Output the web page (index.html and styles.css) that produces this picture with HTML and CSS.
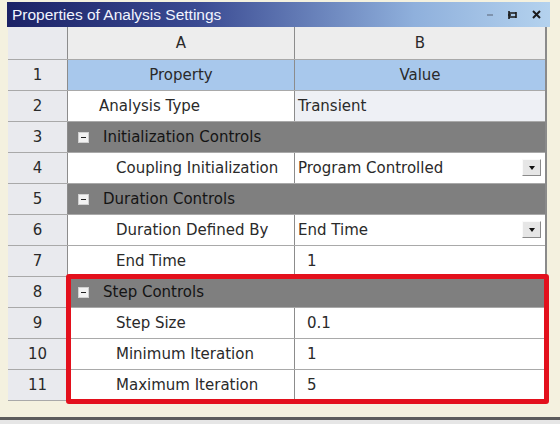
FILE: index.html
```html
<!DOCTYPE html>
<html lang="en">
<head>
    <meta charset="UTF-8">
    <title>Properties of Analysis Settings</title>
    <link rel="stylesheet" href="styles.css">
</head>
<body>
<div class="prop-window">
    <div class="prop-title">
        <span class="prop-title-text">Properties of Analysis Settings</span>
        <div class="prop-title-btns">
            <svg width="10" height="10" viewBox="0 0 10 10"><path d="M2 5h6" stroke="#6f7f96" stroke-width="1.4" fill="none"/></svg>
            <svg width="12" height="12" viewBox="0 0 12 12"><path d="M2 2v8M2 4h7M2 8h7M9 3v6M4 6h-3" stroke="#1a1a1a" stroke-width="1.6" fill="none"/></svg>
            <svg width="11" height="11" viewBox="0 0 11 11"><path d="M2 2l7 7M9 2l-7 7" stroke="#1a1a1a" stroke-width="2" fill="none"/></svg>
        </div>
    </div>
    <div class="prop-grid">
        <div class="prop-row head">
            <div class="num"></div>
            <div class="cell center">A</div>
            <div class="cell center">B</div>
        </div>
        <div class="prop-row caption">
            <div class="num">1</div>
            <div class="cell center">Property</div>
            <div class="cell center">Value</div>
        </div>
        <div class="prop-row">
            <div class="num">2</div>
            <div class="cell lvl1">Analysis Type</div>
            <div class="cell val readonly">Transient</div>
        </div>
        <div class="prop-row group">
            <div class="num">3</div>
            <div class="cell span"><span class="toggle"></span>Initialization Controls</div>
        </div>
        <div class="prop-row">
            <div class="num">4</div>
            <div class="cell lvl2">Coupling Initialization</div>
            <div class="cell val">Program Controlled<span class="drop"></span></div>
        </div>
        <div class="prop-row group">
            <div class="num">5</div>
            <div class="cell span"><span class="toggle"></span>Duration Controls</div>
        </div>
        <div class="prop-row">
            <div class="num">6</div>
            <div class="cell lvl2">Duration Defined By</div>
            <div class="cell val">End Time<span class="drop"></span></div>
        </div>
        <div class="prop-row">
            <div class="num">7</div>
            <div class="cell lvl2">End Time</div>
            <div class="cell val number">1</div>
        </div>
        <div class="step-block">
            <div class="prop-row group">
                <div class="num">8</div>
                <div class="cell span"><span class="toggle"></span>Step Controls</div>
            </div>
            <div class="prop-row">
                <div class="num">9</div>
                <div class="cell lvl2">Step Size</div>
                <div class="cell val number">0.1</div>
            </div>
            <div class="prop-row">
                <div class="num">10</div>
                <div class="cell lvl2">Minimum Iteration</div>
                <div class="cell val number">1</div>
            </div>
            <div class="prop-row">
                <div class="num">11</div>
                <div class="cell lvl2">Maximum Iteration</div>
                <div class="cell val number">5</div>
            </div>
            <div class="highlight"></div>
        </div>
    </div>
    <div class="prop-foot"></div>
</div>
</body>
</html>
```

FILE: styles.css
```css
html, body {
    margin: 0;
    padding: 0;
}
body {
    width: 560px;
    height: 424px;
    overflow: hidden;
    background: #f4f1df;
    font-family: "DejaVu Sans", Verdana, sans-serif;
    font-size: 15px;
    color: #2a2a2a;
}
.prop-window {
    padding: 2px 0 0 7px;
}
.prop-title {
    display: flex;
    align-items: center;
    justify-content: space-between;
    width: 543px;
    height: 25px;
    background: linear-gradient(to right, #1b2266 0%, #3a4a92 35%, #8fb0dc 75%, #b4d2ee 100%);
}
.prop-title-text {
    color: #f2f4ff;
    font-family: "Liberation Sans", Arial, sans-serif;
    font-size: 15.5px;
    padding-left: 5px;
}
.prop-title-btns {
    display: flex;
    align-items: center;
    gap: 12px;
    padding-right: 8px;
}
.prop-grid {
    position: relative;
    width: 537px;
    margin-left: 1px;
    border-right: 2px solid #8a8a8a;
    background: #fff;
}
.prop-row {
    display: grid;
    grid-template-columns: 60px 226px 1fr;
    height: 31px;
    border-bottom: 1px solid #a9a9a9;
    box-sizing: border-box;
}
.prop-row.head {
    height: 33px;
    background: #ededed;
}
.prop-row .num {
    display: flex;
    align-items: center;
    justify-content: center;
    background: #e9eaee;
    border-right: 1px solid #8c8c8c;
}
.prop-row .cell {
    display: flex;
    align-items: center;
    white-space: nowrap;
    overflow: hidden;
}
.prop-row .cell + .cell {
    border-left: 1px solid #8c8c8c;
}
.prop-row .center {
    justify-content: center;
}
.prop-row.caption .cell {
    background: #a8c8ec;
}
.prop-row.head .cell {
    background: #ededed;
}
.lvl1 {
    padding-left: 31px;
}
.lvl2 {
    padding-left: 48px;
}
.val {
    position: relative;
    padding-left: 3px;
}
.val.number {
    padding-left: 12px;
}
.val.readonly {
    background: #eef0f5;
}
.prop-row.group .cell.span {
    grid-column: 2 / 4;
    background: #7f7f7f;
    color: #141414;
    padding-left: 10px;
}
.toggle {
    display: inline-block;
    position: relative;
    width: 9px;
    height: 9px;
    margin-right: 14px;
    background: #f2f2f2;
    border: 1px solid #d0d0d0;
}
.toggle:after {
    content: '';
    position: absolute;
    left: 2px;
    top: 4px;
    width: 5px;
    height: 1px;
    background: #222;
}
.drop {
    position: absolute;
    right: 4px;
    top: 6px;
    width: 19px;
    height: 17px;
    box-sizing: border-box;
    background: #e6e6e6;
    border: 1px solid #fafafa;
    border-right-color: #8a8a8a;
    border-bottom-color: #8a8a8a;
}
.drop:after {
    content: '';
    position: absolute;
    left: 6px;
    top: 6px;
    border-top: 4px solid #111;
    border-left: 3px solid transparent;
    border-right: 3px solid transparent;
}
.step-block {
    position: relative;
}
.highlight {
    position: absolute;
    left: 58px;
    right: -4px;
    top: -3px;
    bottom: -3px;
    border: 5px solid #e3101c;
    border-radius: 3px;
}
.prop-foot {
    margin-top: 16px;
    margin-left: -7px;
    height: 3px;
    background: #5c5c5c;
    border-bottom: 20px solid #e6e6e6;
}
```
